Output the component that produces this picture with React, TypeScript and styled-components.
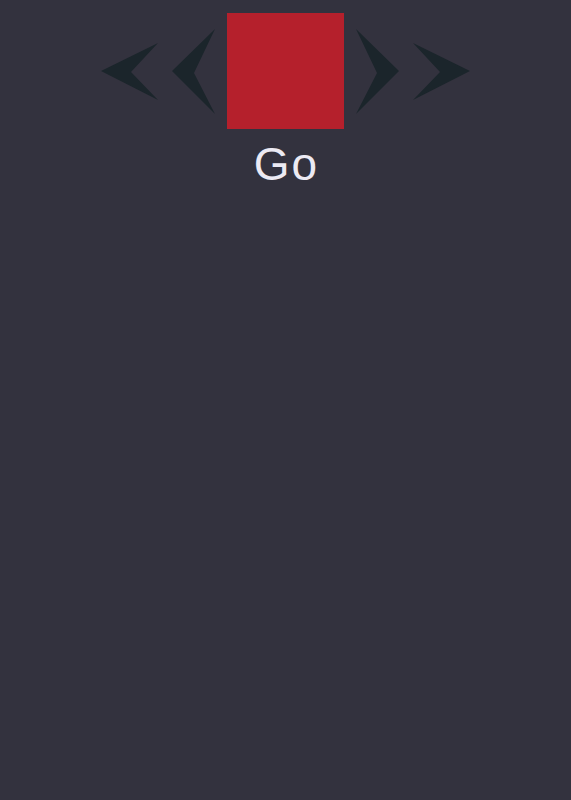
import { FC } from 'react';
import styled, { createGlobalStyle } from 'styled-components';

type Size = 'small' | 'large';

const shapes: Record<Size, { w: number; h: number; points: string }> = {
  small: { w: 57, h: 57, points: '0,28 57,0 30,29 57,57' },
  large: { w: 43, h: 85, points: '0,42 43,0 22,44 43,85' },
};

const GlobalStyle = createGlobalStyle`
  html, body {
    margin: 0;
    padding: 0;
    background-color: #33323e;
  }
  body {
    font-family: "Liberation Sans", "DejaVu Sans", sans-serif;
  }
`;

const Chevron: FC<{ size: Size; flip?: boolean }> = ({ size, flip }) => {
  const { w, h, points } = shapes[size];
  return (
    <SChevron $flip={flip} width={w} height={h} viewBox={`0 0 ${w} ${h}`}>
      <polygon points={points} fill="#1b252b" />
    </SChevron>
  );
};

export default function App() {
  return (
    <>
      <GlobalStyle />
      <SPage>
        <SControls>
          <Chevron size="small" />
          <Chevron size="large" />
          <SGoButton aria-label="Go" />
          <Chevron size="large" flip />
          <Chevron size="small" flip />
        </SControls>
        <SLabel>Go</SLabel>
      </SPage>
    </>
  );
}

const SPage = styled.main`
  min-height: 800px;
  display: flex;
  flex-direction: column;
  align-items: center;
  padding-top: 13px;
  box-sizing: border-box;
`;

const SControls = styled.div`
  display: flex;
  align-items: center;
  gap: 14px;
`;

const SChevron = styled.svg<{ $flip?: boolean }>`
  display: block;
  transform: ${({ $flip }) => ($flip ? 'scaleX(-1)' : 'none')};
`;

const SGoButton = styled.div`
  width: 117px;
  height: 116px;
  background-color: #b5202c;
  margin: 0 -2px;
`;

const SLabel = styled.div`
  margin-top: 8px;
  padding-left: 2px;
  font-size: 46px;
  letter-spacing: 2px;
  color: #eceaf3;
`;
